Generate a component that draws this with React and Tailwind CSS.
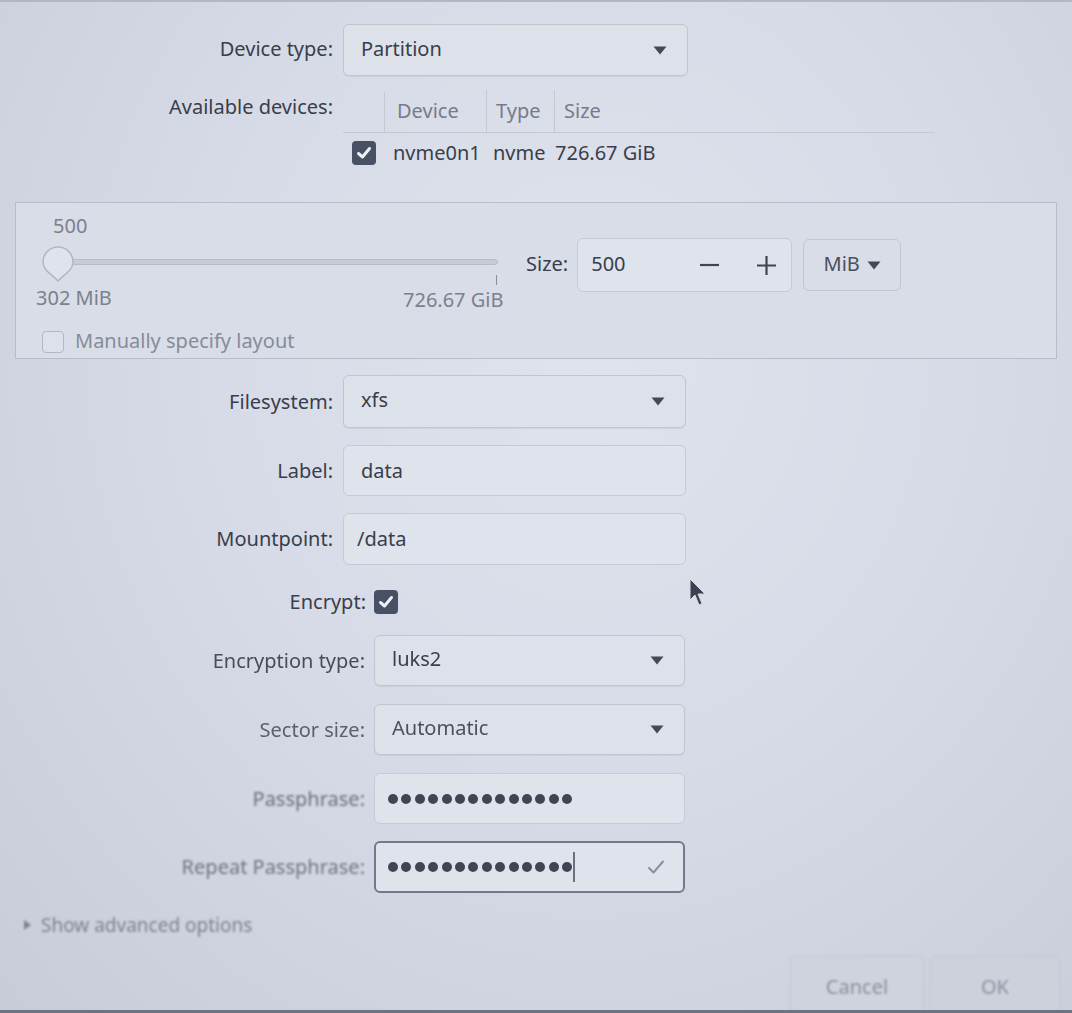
import React from "react";

const Tri = ({ className = "" }) => (
  <svg width="14" height="9" viewBox="0 0 14 9" className={className}>
    <path d="M0.5 0.5 H13.5 L7 8.5 Z" fill="#434958" />
  </svg>
);

const Check = ({ size = 24 }) => (
  <div
    className="rounded-[4px] bg-[#485163] flex items-center justify-center shrink-0"
    style={{ width: size, height: size }}
  >
    <svg width={size - 6} height={size - 6} viewBox="0 0 18 18">
      <path d="M3.5 9.5 L7.5 13 L14.5 4.5" stroke="#eef0f5" strokeWidth="3" fill="none" strokeLinecap="round" strokeLinejoin="round" />
    </svg>
  </div>
);

const Combo = ({ value, w, h = 52, textClass = "" }) => (
  <div
    className="flex items-center justify-between rounded-[6px] border border-[#c1c5cf] bg-[#dde1ea] shadow-[0_1px_1px_rgba(0,0,0,0.06)] pl-[17px] pr-[20px] shrink-0"
    style={{ width: w, height: h }}
  >
    <span className={"-mt-[3px] " + textClass}>{value}</span>
    <Tri />
  </div>
);

const Entry = ({ children, w, h = 52, focused = false, className = "" }) => (
  <div
    className={
      "flex items-center rounded-[6px] bg-[#dfe3ec] pl-[13px] pr-[18px] shrink-0 " +
      (focused ? "border-2 border-[#737988] " : "border border-[#c6cad4] ") +
      className
    }
    style={{ width: w, height: h }}
  >
    {children}
  </div>
);

const Dots = ({ caret = false }) => (
  <div className="flex items-center gap-[3.4px]">
    {Array.from({ length: 14 }).map((_, i) => (
      <div key={i} className="w-[10px] h-[10px] rounded-full bg-[#3f4553]" />
    ))}
    {caret && <div className="w-[2px] h-[30px] bg-[#6a707e] -ml-[2px]" />}
  </div>
);

export default function App() {
  return (
    <div
      className="relative w-[1072px] h-[1013px] overflow-hidden text-[20px] text-[#383e4b] bg-[radial-gradient(ellipse_at_55%_35%,#dfe3ed_0%,#d7dbe7_45%,#c8ccd8_100%)]"
      style={{ fontFamily: '"Noto Sans", "Open Sans", sans-serif' }}
    >
      <div className="h-[2px] bg-[#b3b7c3]" />
      <div className="flex flex-col pt-[22px]">
        {/* Device type */}
        <div className="flex items-center">
          <div className="w-[333px] text-right -mt-[3px]">Device type:</div>
          <div className="ml-[10px]">
            <Combo value="Partition" w={345} />
          </div>
        </div>

        {/* Available devices */}
        <div className="flex mt-[14px]">
          <div className="w-[333px] text-right pt-[2px]">Available devices:</div>
          <div className="ml-[10px] w-[592px] flex flex-col">
            <div className="flex h-[43px] border-b border-[#c4c8d2] text-[#767b88]">
              <div className="w-[42px] border-r border-[#c4c8d2] mt-[2px]" />
              <div className="w-[102px] border-r border-[#c4c8d2] pl-[12px] flex items-center">Device</div>
              <div className="w-[68px] border-r border-[#c4c8d2] pl-[9px] flex items-center">Type</div>
              <div className="flex-1 pl-[9px] flex items-center">Size</div>
            </div>
            <div className="flex items-center h-[40px]">
              <div className="w-[42px] pl-[9px]">
                <Check size={24} />
              </div>
              <div className="w-[102px] pl-[8px]">nvme0n1</div>
              <div className="w-[68px] pl-[6px]">nvme</div>
              <div className="flex-1">726.67 GiB</div>
            </div>
          </div>
        </div>

        {/* Frame */}
        <div className="mt-[29px] ml-[15px] w-[1042px] h-[157px] border border-[#b8bcc7] bg-[#d9dde8] flex flex-col pl-[20px] pt-[10px]">
          <div className="flex items-start">
            <div className="relative w-[478px] h-[102px] text-[#7b808d]">
              <div className="absolute left-[17px] top-[-2px]">500</div>
              <div className="absolute left-[30px] top-[46px] w-[432px] h-[6px] rounded-[3px] bg-[#c8ccd6] border border-[#b9bdc8]" />
              <svg className="absolute left-[5px] top-[32px]" width="34" height="38" viewBox="0 0 34 38">
                <path d="M17 36 C 12 30, 2 26, 2 17 A 15 15 0 1 1 32 17 C 32 26, 22 30, 17 36 Z" fill="#dfe3eb" stroke="#b3b7c2" strokeWidth="1.5" />
              </svg>
              <div className="absolute left-[460px] top-[62px] w-[1px] h-[10px] bg-[#8a8f9c]" />
              <div className="absolute left-[0px] top-[70px]">302 MiB</div>
              <div className="absolute left-[367px] top-[72px]">726.67 GiB</div>
            </div>
            <div className="flex items-center mt-[25px] ml-[12px]">
              <span className="-mt-[3px]">Size:</span>
              <Entry w={215} h={54} className="ml-[9px] !pl-[13px] !pr-[14px] justify-between">
                <span className="-mt-[3px]">500</span>
                <div className="flex items-center gap-[36px]">
                  <svg width="21" height="20" viewBox="0 0 21 20">
                    <path d="M1 10 H20" stroke="#3f4553" strokeWidth="2.2" />
                  </svg>
                  <svg width="21" height="21" viewBox="0 0 21 21">
                    <path d="M1 10.5 H20 M10.5 1 V20" stroke="#3f4553" strokeWidth="2.2" />
                  </svg>
                </div>
              </Entry>
              <div className="ml-[11px] w-[98px] h-[52px] rounded-[6px] border border-[#c1c5cf] bg-[#d9dde7] flex items-center justify-center gap-[7px] text-[#4a505e]">
                <span className="-mt-[2px]">MiB</span>
                <Tri className="mt-[1px]" />
              </div>
            </div>
          </div>
          <div className="flex items-center mt-[13px] ml-[6px] text-[#878c99]">
            <div className="w-[22px] h-[22px] rounded-[4px] border-[1.5px] border-[#b3b7c2] bg-[#dde1ea]" />
            <span className="ml-[11px] -mt-[2px]">Manually specify layout</span>
          </div>
        </div>

        {/* Filesystem etc */}
        <div className="flex flex-col gap-[17px] mt-[16px]">
          <div className="flex items-center">
            <div className="w-[333px] text-right">Filesystem:</div>
            <div className="ml-[10px]"><Combo value="xfs" w={343} h={53} /></div>
          </div>
          <div className="flex items-center">
            <div className="w-[333px] text-right">Label:</div>
            <div className="ml-[10px]"><Entry w={343} h={51} className="!pl-[17px]">data</Entry></div>
          </div>
          <div className="flex items-center">
            <div className="w-[333px] text-right">Mountpoint:</div>
            <div className="ml-[10px]"><Entry w={343} h={52} className="!pl-[13px]">/data</Entry></div>
          </div>
        </div>

        <div className="flex items-center mt-[25px] h-[24px]">
          <div className="w-[366px] text-right">Encrypt:</div>
          <div className="ml-[8px]"><Check size={24} /></div>
        </div>

        <div className="flex flex-col gap-[18px] mt-[21px]">
          <div className="flex items-center">
            <div className="w-[365px] text-right text-[#464c59] blur-[0.4px]">Encryption type:</div>
            <div className="ml-[9px]"><Combo value="luks2" w={311} h={51} textClass="blur-[0.3px]" /></div>
          </div>
          <div className="flex items-center">
            <div className="w-[365px] text-right text-[#5a606d] blur-[0.7px]">Sector size:</div>
            <div className="ml-[9px]"><Combo value="Automatic" w={311} h={51} textClass="text-[#4a505d] blur-[0.5px]" /></div>
          </div>
          <div className="flex items-center">
            <div className="w-[365px] text-right text-[#6a707d] blur-[0.9px]">Passphrase:</div>
            <div className="ml-[9px]"><Entry w={311} h={51}><Dots /></Entry></div>
          </div>
          <div className="flex items-center -mt-[1px]">
            <div className="w-[365px] text-right text-[#6f7582] blur-[1.1px]">Repeat Passphrase:</div>
            <div className="ml-[9px]">
              <Entry w={311} h={52} focused className="!pl-[12px] justify-between">
                <Dots caret />
                <svg width="18" height="16" viewBox="0 0 18 16">
                  <path d="M2 9 L6.5 13.5 L16 2.5" stroke="#8a8f9b" strokeWidth="2" fill="none" strokeLinecap="round" strokeLinejoin="round" />
                </svg>
              </Entry>
            </div>
          </div>
        </div>

        <div className="flex items-center mt-[18px] ml-[22px] text-[#7e8392] blur-[1.1px] text-[19px]">
          <svg width="10" height="12" viewBox="0 0 10 12">
            <path d="M2 1 L9 6 L2 11 Z" fill="#7e8392" />
          </svg>
          <span className="ml-[9px]">Show advanced options</span>
        </div>

        <div className="flex justify-end mt-[16px] mr-[12px] gap-[6px] text-[#8b909d] blur-[0.9px]">
          <div className="w-[134px] h-[62px] rounded-[6px] border-[1.5px] border-[#c2c6d0] bg-[#cfd3dd] flex items-center justify-center">Cancel</div>
          <div className="w-[130px] h-[62px] rounded-[6px] border-[1.5px] border-[#c2c6d0] bg-[#cdd1db] flex items-center justify-center">OK</div>
        </div>
      </div>

      {/* mouse pointer */}
      <svg className="absolute left-[688px] top-[578px]" width="20" height="30" viewBox="0 0 20 30">
        <path d="M2 1 L2 22 L7 17 L11 27 L14 25.5 L10 16 L17 16 Z" fill="#3b4150" stroke="#d5d9e3" strokeWidth="1" />
      </svg>

      <div className="absolute left-0 right-0 bottom-0 h-[3px] bg-[#6f7482]" />
    </div>
  );
}
